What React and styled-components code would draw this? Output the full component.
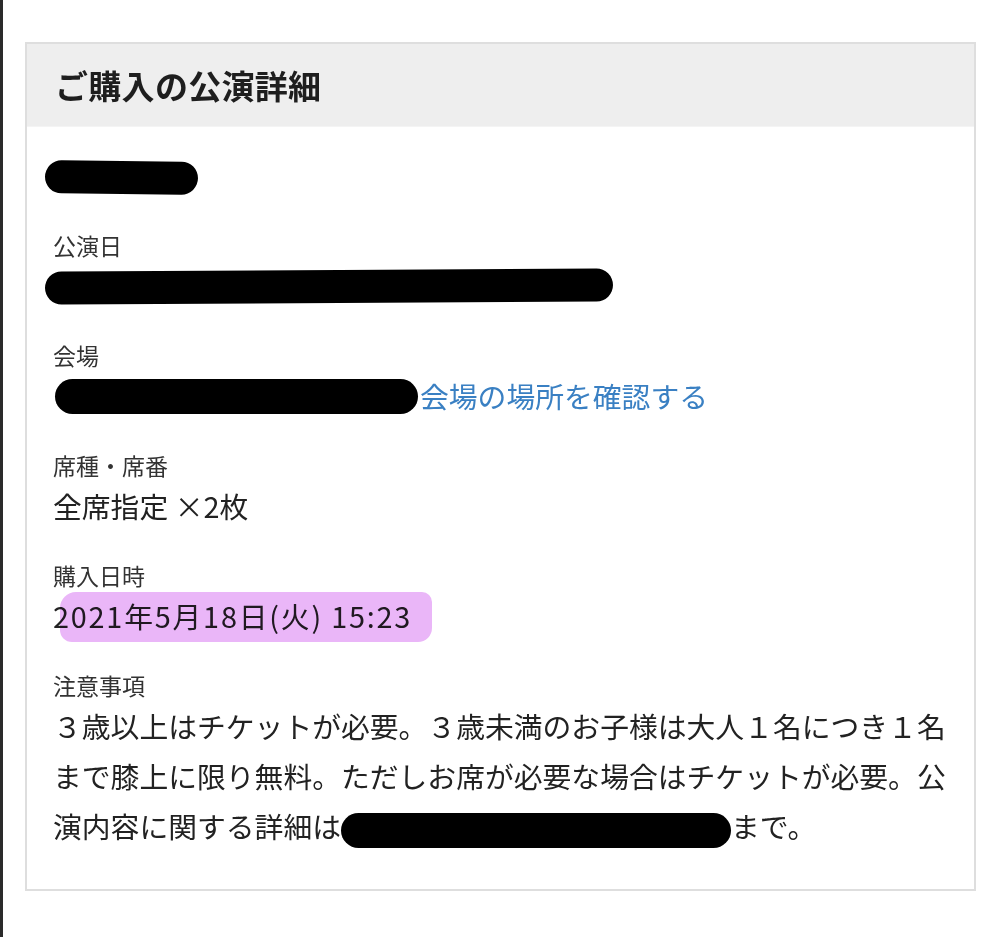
import React from 'react';
import styled, { createGlobalStyle } from 'styled-components';

const GlobalStyle = createGlobalStyle`
  html, body {
    margin: 0;
    padding: 0;
    background: #ffffff;
  }
  body {
    font-family: "Noto Sans CJK JP", "Noto Sans", sans-serif;
    color: #222;
  }
`;

const Page = styled.div`
  box-sizing: border-box;
  height: 937px;
  border-left: 3px solid #2a2a2a;
  padding: 42px 23px 0 22px;
`;

const Card = styled.div`
  box-sizing: border-box;
  width: 951px;
  border: 2px solid #dedede;
  background: #fff;
`;

const Header = styled.div`
  height: 82px;
  background: #eeeeee;
  border-bottom: 1px solid #f4f4f4;
  display: flex;
  align-items: center;
  padding-left: 28px;
`;

const Title = styled.h1`
  margin: 0;
  font-size: 33px;
  font-weight: 700;
  color: #1e1e1e;
  letter-spacing: 0.3px;
`;

const Body = styled.div`
  padding: 25px 26px 38px 26px;
`;

const NameRow = styled.div`
  height: 50px;
  display: flex;
  align-items: center;
  margin-left: -8px;
`;

const Section = styled.div`
  margin-top: ${p => (p.first ? '27px' : '28px')};
`;

const Label = styled.div`
  font-size: 23px;
  line-height: 32px;
  color: #333;
`;

const Value = styled.div`
  height: 50px;
  font-size: 28.8px;
  line-height: 50px;
  color: #222;
  display: flex;
  align-items: center;
  white-space: nowrap;
`;

const Redact = styled.span`
  display: inline-block;
  flex: none;
  width: ${p => p.w}px;
  height: ${p => p.h || 33}px;
  background: #000;
  border-radius: ${p => (p.h || 33) / 2}px;
  transform: rotate(${p => p.tilt || 0}deg);
  margin-left: ${p => p.ml || 0}px;
  vertical-align: middle;
`;

const Link = styled.a`
  color: #3a80c3;
  text-decoration: none;
  margin-left: 2px;
`;

const Highlight = styled.span`
  position: relative;
  letter-spacing: 1.8px;
  &::after {
    content: '';
    position: absolute;
    left: 7px;
    right: -20px;
    top: 1px;
    bottom: -1px;
    background: #eab6f8;
    border-radius: 16px 10px 14px 12px;
    mix-blend-mode: multiply;
  }
`;

const Note = styled.p`
  margin: 0;
  width: 894px;
  font-size: 28.8px;
  line-height: 50px;
  color: #222;
  line-break: strict;
`;

export default function App() {
  return (
    <>
      <GlobalStyle />
      <Page>
        <Card>
          <Header>
            <Title>ご購入の公演詳細</Title>
          </Header>
          <Body>
            <NameRow>
              <Redact w={153} tilt={0.6} />
            </NameRow>

            <Section first>
              <Label>公演日</Label>
              <Value>
                <Redact w={568} h={33} tilt={-0.3} ml={-8} />
              </Value>
            </Section>

            <Section>
              <Label>会場</Label>
              <Value>
                <Redact w={363} h={35} ml={2} />
                <Link href="#">会場の場所を確認する</Link>
              </Value>
            </Section>

            <Section>
              <Label>席種・席番</Label>
              <Value>全席指定 ×2枚</Value>
            </Section>

            <Section>
              <Label>購入日時</Label>
              <Value>
                <Highlight>2021年5月18日(火) 15:23</Highlight>
              </Value>
            </Section>

            <Section>
              <Label>注意事項</Label>
              <Note>
                ３歳以上はチケットが必要。３歳未満のお子様は大人１名につき１名まで膝上に限り無料。ただしお席が必要な場合はチケットが必要。公演内容に関する詳細は<Redact w={390} h={35} />まで。
              </Note>
            </Section>
          </Body>
        </Card>
      </Page>
    </>
  );
}
